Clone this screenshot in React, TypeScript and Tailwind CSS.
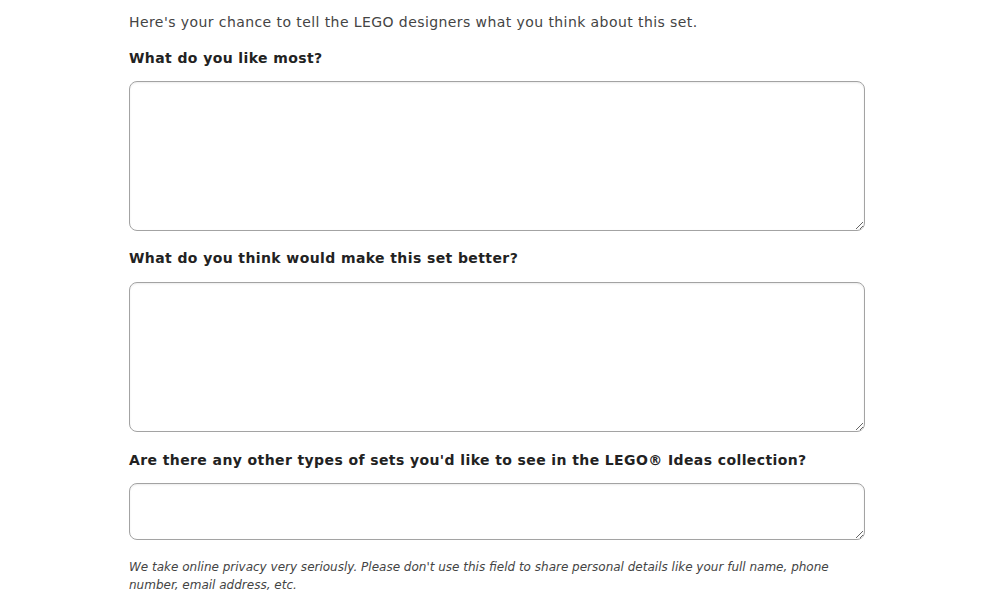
export default function App() {
  const font = { fontFamily: '"DejaVu Sans", Verdana, sans-serif' };
  const box =
    "block w-[736px] rounded-[8px] border border-[#a3a3a3] bg-white shadow-[inset_0_1px_2px_rgba(0,0,0,0.08)] outline-none";
  const label = "block text-[14px] font-bold leading-[20px] tracking-[0.4px] text-[#222]";

  return (
    <div className="min-h-[600px] w-[1000px] bg-white pl-[129px] pt-[12px]" style={font}>
      <p className="text-[14px] leading-[20px] tracking-[0.42px] text-[#444]">
        Here's your chance to tell the LEGO designers what you think about this set.
      </p>

      <label className={`${label} mt-[16px]`}>What do you like most?</label>
      <textarea className={`${box} mt-[13px] h-[150px]`} />

      <label className={`${label} mt-[17px]`}>What do you think would make this set better?</label>
      <textarea className={`${box} mt-[14px] h-[150px]`} />

      <label className={`${label} mt-[18px]`}>
        Are there any other types of sets you'd like to see in the LEGO® Ideas collection?
      </label>
      <textarea className={`${box} mt-[13px] h-[57px]`} />

      <p className="mt-[18px] w-[720px] text-[12px] italic leading-[18px] text-[#444]">
        We take online privacy very seriously. Please don't use this field to share personal details like your full
        name, phone number, email address, etc.
      </p>
    </div>
  );
}
